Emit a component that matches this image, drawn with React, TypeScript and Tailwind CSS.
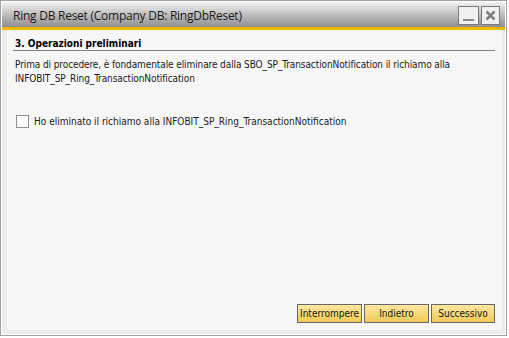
import React from "react";

export default function App() {
  const txt = { fontFamily: '"DejaVu Sans Condensed", "DejaVu Sans", sans-serif', fontStretch: "condensed" as const };
  return (
    <div className="w-[509px] h-[338px] bg-white">
      <div className="w-[507px] h-[336px] border border-[#a0a0a0] bg-white p-px">
        <div className="flex h-full flex-col bg-[#ebebeb] pb-[4px]">
          {/* title bar */}
          <div className="flex h-[25px] items-center justify-between bg-gradient-to-b from-[#f2f2f2] to-[#8f8f8f] pl-[11px] pr-[5px]">
            <span
              className="pt-[2px] text-[12px] tracking-[-0.25px] text-[#1a1a1a]"
              style={{ fontFamily: '"Open Sans", "Noto Sans", sans-serif' }}
            >
              Ring DB Reset (Company DB: RingDbReset)
            </span>
            <div className="flex gap-[2px] pt-[1px]">
              <div className="flex h-[19px] w-[21px] items-end justify-center border border-[#7a7a7a] bg-[#f0f0f0] pb-[3px]">
                <div className="h-[2px] w-[11px] bg-[#8a8a8a]" />
              </div>
              <div className="flex h-[19px] w-[19px] items-center justify-center border border-[#7a7a7a] bg-[#f0f0f0]">
                <svg width="11" height="11" viewBox="0 0 11 11">
                  <path d="M1.5 1.5 L9.5 9.5 M9.5 1.5 L1.5 9.5" stroke="#7f7f7f" strokeWidth="2.5" />
                </svg>
              </div>
            </div>
          </div>
          <div className="h-[3px] bg-[#f5b800]" />
          {/* content */}
          <div className="ml-[5px] mr-[3px] flex flex-1 flex-col bg-[#f6f6f6] pl-[6px] pr-[7px] pt-[7px] pb-[7px]" style={txt}>
            <div className="h-[14px] border-b border-[#808080] pl-[2px] text-[10px] font-bold leading-[13px] text-black">
              3. Operazioni preliminari
            </div>
            <div className="mt-[7px] pl-[2px] text-[10px] leading-[14px] tracking-[-0.1px] text-[#1a1a1a] whitespace-nowrap">
              Prima di procedere, è fondamentale eliminare dalla SBO_SP_TransactionNotification il richiamo alla
              <br />
              INFOBIT_SP_Ring_TransactionNotification
            </div>
            <label className="mt-[28px] flex h-[15px] items-center gap-[5px] pl-[3px] text-[10px] leading-[14px] text-[#1a1a1a]">
              <span className="h-[13px] w-[13px] border border-[#8e8e8e] bg-white" />
              Ho eliminato il richiamo alla INFOBIT_SP_Ring_TransactionNotification
            </label>
            <div className="mt-auto flex justify-end gap-[2px]">
              <button className="h-[19px] w-[65px] border border-[#666] bg-gradient-to-b from-[#fbe7a0] to-[#f0c853] text-[10px] leading-[14px] text-[#1a1a1a]">
                Interrompere
              </button>
              <button className="h-[19px] w-[65px] border border-[#666] bg-gradient-to-b from-[#fbe7a0] to-[#f0c853] text-[10px] leading-[14px] text-[#1a1a1a]">
                Indietro
              </button>
              <button className="h-[19px] w-[64px] border border-[#666] bg-gradient-to-b from-[#fbe7a0] to-[#f0c853] text-[10px] leading-[14px] text-[#1a1a1a]">
                Successivo
              </button>
            </div>
          </div>
        </div>
      </div>
    </div>
  );
}
